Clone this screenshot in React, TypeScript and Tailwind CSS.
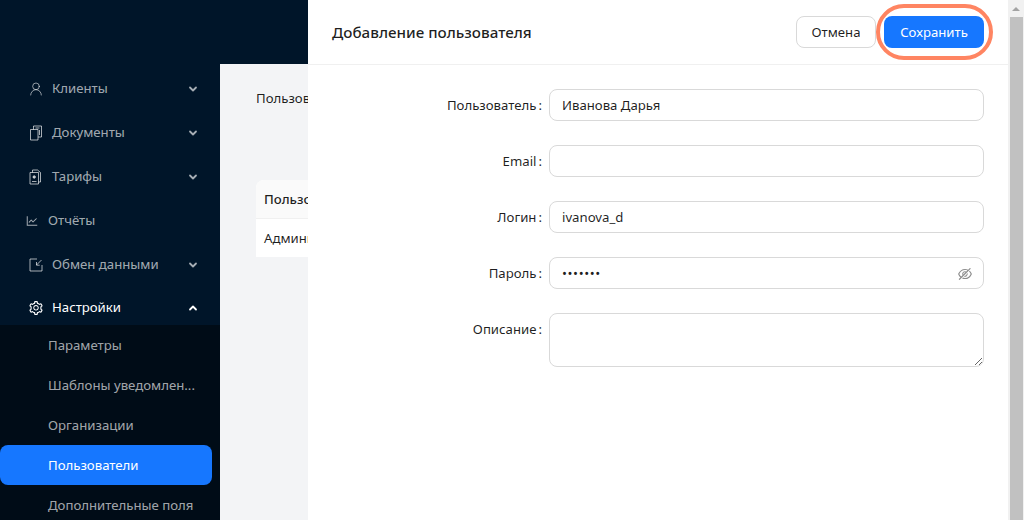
import { ChevronDown, ChevronUp, UserRound } from "lucide-react"
import { AiOutlineEyeInvisible, AiOutlineLineChart, AiOutlineSetting } from "react-icons/ai"

function DocsIcon() {
  return (
    <svg width="14" height="16" viewBox="0 0 14 16" fill="none" stroke="currentColor" strokeWidth="1">
      <path d="M1.5 4.5h7.5v10.5h-7.5z" strokeLinejoin="round" />
      <path d="M4.5 4.5v-3.5h8v11h-3.5" strokeLinejoin="round" />
      <path d="M6.5 3h4M10.5 5v5" />
    </svg>
  )
}

function TariffIcon() {
  return (
    <svg width="14" height="16" viewBox="0 0 14 16" fill="none" stroke="currentColor" strokeWidth="1">
      <path d="M1 3.5h8.5v11.5h-8.5z" strokeLinejoin="round" />
      <path d="M3.5 3.5v-2.5h5l3 2.5v9.5h-2" strokeLinejoin="round" />
      <path d="M3 12.5h4.5" />
      <circle cx="5.2" cy="8" r="1.2" fill="currentColor" />
    </svg>
  )
}

function ExchangeIcon() {
  return (
    <svg width="14" height="14" viewBox="0 0 14 14" fill="none" stroke="currentColor" strokeWidth="1">
      <path d="M8 1h-7v12h12v-6" />
      <path d="M12.5 2l-5 5M7.5 4v3.2h3.2" />
    </svg>
  )
}

const menu = [
  { label: "Клиенты", icon: <UserRound size={16} strokeWidth={1.3} className="-ml-[1px]" /> },
  { label: "Документы", icon: <DocsIcon /> },
  { label: "Тарифы", icon: <TariffIcon /> },
]

const subItems = ["Параметры", "Шаблоны уведомлен...", "Организации", "Пользователи", "Дополнительные поля"]

function MenuRow({ label, icon }: { label: string; icon: React.ReactNode }) {
  return (
    <div className="h-11 flex items-center pl-[29px] pr-[21px] pt-[2px] text-[#ffffffa6]">
      <span className="w-[23px] flex items-center">{icon}</span>
      <span className="flex-1">{label}</span>
      <ChevronDown size={12} strokeWidth={3.6} />
    </div>
  )
}

function Field({ label, children }: { label: string; children: React.ReactNode }) {
  return (
    <div className="flex">
      <div className="w-[241px] h-8 flex items-center justify-end pr-[7px] pt-[2px] text-[#000000e0]">
        {label}
        <span className="ml-[2px]">:</span>
      </div>
      <div className="flex-1">{children}</div>
    </div>
  )
}

const inputCls = "h-8 w-full border border-[#d9d9d9] rounded-lg px-3 pt-[2px] flex items-center text-[#000000e0]"

export default function App() {
  return (
    <div className="w-[1024px] h-[520px] flex overflow-hidden bg-white text-[13.2px] font-['Noto_Sans',sans-serif]">
      <div className="relative flex-1 flex overflow-hidden">
        {/* sidebar */}
        <aside className="w-[220px] h-full bg-[#001529] pt-[66px] shrink-0">
          {menu.map((m) => (
            <MenuRow key={m.label} label={m.label} icon={m.icon} />
          ))}
          <div className="h-11 flex items-center pl-[25px] pt-[2px] text-[#ffffffa6]">
            <AiOutlineLineChart size={14} />
            <span className="ml-[9px]">Отчёты</span>
          </div>
          <MenuRow label="Обмен данными" icon={<ExchangeIcon />} />
          <div className="h-[39px] flex items-center pl-[28px] pr-[21px] pt-[5px] text-white">
            <span className="w-[24px] flex items-center">
              <AiOutlineSetting size={16} />
            </span>
            <span className="flex-1">Настройки</span>
            <ChevronUp size={12} strokeWidth={3.6} />
          </div>
          <div className="bg-[#000c17] pr-[8px] h-[300px]">
            {subItems.map((s, i) => (
              <div
                key={s}
                className={
                  i === 3
                    ? "h-10 flex items-center pl-[48px] pt-[2px] bg-[#1677ff] text-white rounded-lg"
                    : "h-10 flex items-center pl-[48px] pt-[2px] text-[#ffffffa6]"
                }
              >
                {s}
              </div>
            ))}
          </div>
        </aside>

        {/* page behind the drawer */}
        <div className="flex-1 flex flex-col min-w-0">
          <div className="h-16 bg-[#001529] shrink-0"></div>
          <div className="flex-1 bg-[#f3f4f6] pl-[36px] pt-[25px]">
            <div className="h-[91px] text-[#000000e0] whitespace-nowrap">Пользователи</div>
            <div className="bg-white rounded-t-lg w-[400px] text-[#000000e0]">
              <div className="h-[39px] bg-[#fafafa] rounded-t-lg border-b border-[#f0f0f0] flex items-center pl-2 pt-[2px] font-medium">Пользователь</div>
              <div className="h-[38px] flex items-center pl-2 pt-[2px]">Администратор</div>
            </div>
          </div>
        </div>

        {/* drawer */}
        <div className="absolute left-[308px] top-0 bottom-0 w-[700px] bg-white flex flex-col">
          <div className="h-[65px] shrink-0 border-b border-[#f0f0f0] flex items-center pl-6 pr-6">
            <div className="flex-1 text-[15.2px] font-medium text-[#000000e0]">Добавление пользователя</div>
            <button className="w-20 h-8 pt-[2px] border border-[#d9d9d9] rounded-lg text-[#000000e0] mr-2">Отмена</button>
            <button className="w-[100px] h-8 pt-[2px] bg-[#1677ff] rounded-lg text-white">Сохранить</button>
          </div>
          <div className="flex flex-col gap-6 pt-6 pr-6">
            <Field label="Пользователь">
              <div className={inputCls}>Иванова Дарья</div>
            </Field>
            <Field label="Email">
              <div className={inputCls}></div>
            </Field>
            <Field label="Логин">
              <div className={inputCls}>ivanova_d</div>
            </Field>
            <Field label="Пароль">
              <div className={inputCls}>
                <span className="flex-1 text-[#000000e0] tracking-[0.6px]">•••••••</span>
                <AiOutlineEyeInvisible size={16} className="text-[#00000073] -mr-[2px]" />
              </div>
            </Field>
            <Field label="Описание">
              <textarea className="block w-full h-[54px] border border-[#d9d9d9] rounded-lg px-3 py-1 outline-none"></textarea>
            </Field>
          </div>
          {/* highlight around the save button */}
          <div className="absolute left-[568px] top-[4px] w-[117px] h-[56px] border-[4px] border-[#ff8562] rounded-[28px] pointer-events-none"></div>
        </div>
      </div>

      {/* window scrollbar */}
      <div className="w-4 shrink-0 bg-[#f1f1f1] flex flex-col items-center">
        <div className="h-[17px] flex items-center justify-center">
          <div className="w-0 h-0 border-l-[4px] border-r-[4px] border-b-[4px] border-l-transparent border-r-transparent border-b-[#a3a3a3]"></div>
        </div>
        <div className="w-[13px] flex-1 bg-[#c1c1c1]"></div>
      </div>
    </div>
  )
}
